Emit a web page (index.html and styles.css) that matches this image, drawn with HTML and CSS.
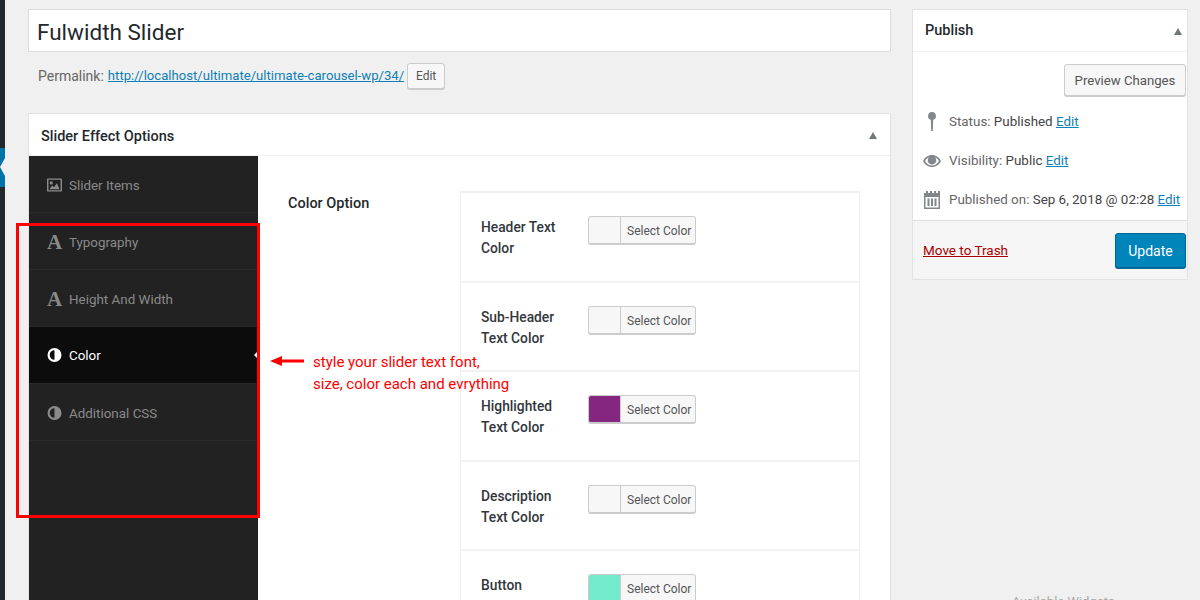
FILE: index.html
```html
<!DOCTYPE html>
<html lang="en">
<head>
  <meta charset="UTF-8" />
  <title>Edit Slider</title>
  <link rel="stylesheet" href="styles.css">
</head>
<body>

  <div class="page">
    <div class="admin-menu">
      <div class="admin-menu-current"></div>
    </div>

    <main class="content">
      <div class="title-box">Fulwidth Slider</div>
      <div class="permalink">
        <span>Permalink:</span>
        <a href="#">http://localhost/ultimate/ultimate-carousel-wp/34/</a>
        <button class="btn btn-small">Edit</button>
      </div>

      <section class="postbox">
        <div class="postbox-head main-head">
          <h2>Slider Effect Options</h2>
          <span class="toggle"></span>
        </div>
        <div class="options">
          <ul class="tabs">
            <li>
              <svg class="tab-icon" viewBox="0 0 16 14"><path fill="currentColor" fill-rule="evenodd" d="M1 0h14a1 1 0 0 1 1 1v12a1 1 0 0 1-1 1H1a1 1 0 0 1-1-1V1a1 1 0 0 1 1-1zm.5 1.500v11h13v-11zM2.500 11.500l3-4 2 2 3-4.500 3 6.500zM4.500 6.500a1.700 1.700 0 1 0 0-3.400 1.700 1.700 0 0 0 0 3.400z"/></svg>
              Slider Items
            </li>
            <li><span class="tab-icon tab-letter">A</span> Typography</li>
            <li><span class="tab-icon tab-letter">A</span> Height And Width</li>
            <li class="active">
              <svg class="tab-icon" viewBox="0 0 14 14"><path fill="currentColor" d="M7 0a7 7 0 1 1 0 14A7 7 0 0 1 7 0zm0 2.200a4.800 4.800 0 0 0 0 9.600z"/></svg>
              Color
            </li>
            <li>
              <svg class="tab-icon" viewBox="0 0 14 14"><path fill="currentColor" d="M7 0a7 7 0 1 1 0 14A7 7 0 0 1 7 0zm0 2.200a4.800 4.800 0 0 0 0 9.600z"/></svg>
              Additional CSS
            </li>
          </ul>

          <div class="panel">
            <div class="panel-label">Color Option</div>
            <div class="color-table">
              <div class="color-row">
                <div class="color-name">Header Text<br>Color</div>
                <div class="picker"><span class="swatch"></span><span class="picker-text">Select Color</span></div>
              </div>
              <div class="color-row">
                <div class="color-name">Sub-Header<br>Text Color</div>
                <div class="picker"><span class="swatch"></span><span class="picker-text">Select Color</span></div>
              </div>
              <div class="color-row">
                <div class="color-name">Highlighted<br>Text Color</div>
                <div class="picker"><span class="swatch swatch-purple"></span><span class="picker-text">Select Color</span></div>
              </div>
              <div class="color-row">
                <div class="color-name">Description<br>Text Color</div>
                <div class="picker"><span class="swatch"></span><span class="picker-text">Select Color</span></div>
              </div>
              <div class="color-row">
                <div class="color-name">Button</div>
                <div class="picker"><span class="swatch swatch-mint"></span><span class="picker-text">Select Color</span></div>
              </div>
            </div>
          </div>
        </div>
      </section>
    </main>

    <aside class="side">
      <section class="publish">
        <div class="postbox-head publish-head">
          <h2>Publish</h2>
          <span class="toggle"></span>
        </div>
        <div class="publish-body">
          <div class="preview-row"><button class="btn btn-preview">Preview Changes</button></div>
          <div class="meta">
            <svg class="meta-icon" viewBox="0 0 18 20"><path fill="#82878c" d="M9 0a4 4 0 0 1 1.200 7.800L9.800 19H8.200L7.800 7.800A4 4 0 0 1 9 0z"/></svg>
            <span>Status: <b>Published</b> <a href="#">Edit</a></span>
          </div>
          <div class="meta">
            <svg class="meta-icon" viewBox="0 0 18 20"><path fill="#82878c" fill-rule="evenodd" d="M9 4c4 0 7.300 2.500 9 6-1.700 3.500-5 6-9 6s-7.300-2.500-9-6c1.700-3.500 5-6 9-6zM2 10c1.500 2.700 4 4.500 7 4.500s5.500-1.800 7-4.500c-1-1.700-2.300-3-4-3.800a4.300 4.300 0 1 1-6 0C4.300 7 3 8.300 2 10z"/></svg>
            <span>Visibility: <b>Public</b> <a href="#">Edit</a></span>
          </div>
          <div class="meta">
            <svg class="meta-icon" viewBox="0 0 18 20"><path fill="#82878c" fill-rule="evenodd" d="M1 3h2V1h2v2h2V1h2v2h2V1h2v2h2V1h2v2h0v16H1zm1.500 4v10.500h13V7zM4.500 8.500h2v7.500h-2zm3.500 0h2v7.500H8zm3.500 0h2v7.500h-2z"/></svg>
            <span>Published on: <b>Sep 6, 2018 @ 02:28</b> <a href="#">Edit</a></span>
          </div>
        </div>
        <div class="publish-foot">
          <a class="trash" href="#">Move to Trash</a>
          <button class="btn btn-primary">Update</button>
        </div>
      </section>
      <div class="side-below">Available Widgets</div>
    </aside>
  </div>

  <!-- red notes drawn over the screenshot -->
  <div class="note-box"></div>
  <svg class="note-arrow" viewBox="0 0 34 12"><path fill="#f00" d="M0 6l12-5v3.500h22v3H12V11z"/></svg>
  <p class="note-text">style your slider text font,<br>size, color each and evrything</p>

</body>
</html>
```

FILE: styles.css
```css
/* Base */
body {
  margin: 0;
  height: 600px;
  overflow: hidden;
  background: #f0f0f0;
  color: #32373c;
  font-family: 'Roboto', 'Noto Sans', sans-serif;
  font-size: 14px;
}
a {
  color: #0f7fb5;
}
h2 {
  margin: 0;
  font-size: 14.500px;
  font-weight: 500;
  color: #23282d;
}
ul {
  list-style: none;
  margin: 0;
  padding: 0;
}

.page {
  display: flex;
  height: 600px;
  overflow: hidden;
}

/* Admin menu edge */
.admin-menu {
  flex: none;
  width: 5px;
  background: #23282d;
  padding-top: 148px;
}
.admin-menu-current {
  position: relative;
  height: 39px;
  background: #0073aa;
}
.admin-menu-current::after {
  content: "";
  position: absolute;
  right: 0;
  top: 10px;
  border: 9px solid transparent;
  border-left-width: 0;
  border-right: 5px solid #f0f0f0;
}

/* Main column */
.content {
  flex: none;
  width: 863px;
  margin-left: 23px;
  padding-top: 9px;
}
.title-box {
  height: 41px;
  padding-left: 8px;
  background: #fff;
  border: 1px solid #ddd;
  font-size: 22.500px;
  line-height: 45px;
  color: #23282d;
}
.permalink {
  display: flex;
  align-items: center;
  height: 27px;
  margin: 10px 0 24px;
  padding-left: 10px;
  font-size: 14px;
  color: #666;
}
.permalink a {
  margin-left: 4px;
  font-size: 13.150px;
}
.btn {
  font-family: inherit;
  border-radius: 3px;
  border: 1px solid #ccc;
  background: #f7f7f7;
  box-shadow: 0 1px 0 #ccc;
  color: #555;
  padding: 0;
}
.btn-small {
  width: 38px;
  height: 26px;
  margin-left: 3px;
  font-size: 12px;
}

/* Postbox */
.postbox {
  background: #fff;
  border: 1px solid #e2e2e2;
  border-bottom: 0;
}
.postbox-head {
  display: flex;
  align-items: center;
  justify-content: space-between;
  height: 41px;
  padding: 0 13px 0 12px;
  border-bottom: 1px solid #eee;
}
.main-head h2 {
  padding-top: 3px;
}
.publish-head {
  padding-right: 5px;
}
.toggle {
  width: 0;
  height: 0;
  margin-top: 2px;
  border: 4.500px solid transparent;
  border-top: 0;
  border-bottom: 7px solid #72777c;
}
.options {
  display: flex;
  height: 444px;
}

/* Tabs */
.tabs {
  flex: none;
  width: 229px;
  background: #222;
  color: #8a8a8a;
}
.tabs li {
  display: flex;
  align-items: center;
  gap: 7px;
  box-sizing: border-box;
  height: 57px;
  padding: 2px 0 0 18px;
  border-bottom: 1px solid #2b2b2b;
  font-size: 13.400px;
}
.tabs li.active {
  position: relative;
  padding-top: 0;
  background: #0c0c0c;
  color: #fff;
}
.tabs li.active::after {
  content: "";
  position: absolute;
  right: 0;
  top: 24px;
  border: 4px solid transparent;
  border-left: 0;
  border-right: 4px solid #fff;
}
.tab-icon {
  width: 15px;
  height: 14px;
  flex: none;
}
.tab-letter {
  font-family: 'Liberation Serif', serif;
  font-weight: 700;
  font-size: 21px;
  line-height: 14px;
  text-align: center;
}

/* Color options */
.panel {
  flex: 1;
  display: flex;
  padding: 35px 30px 0;
}
.panel-label {
  width: 172px;
  flex: none;
  padding-top: 4px;
  font-size: 14.500px;
  font-weight: 500;
  color: #23282d;
}
.color-table {
  flex: 1;
  height: 420px;
  border: 1px solid #eee;
  border-top-width: 2px;
  border-bottom: 0;
}
.color-row {
  display: flex;
  box-sizing: border-box;
  height: 89.500px;
  padding: 23px 20px 0;
  border-bottom: 2px solid #f2f2f2;
}
.color-name {
  width: 107px;
  flex: none;
  padding-top: 1px;
  font-size: 13.800px;
  line-height: 21px;
  font-weight: 500;
  color: #32373c;
}
.picker {
  display: flex;
  box-sizing: border-box;
  width: 108px;
  height: 29px;
  border: 1px solid #ccc;
  border-bottom-width: 2px;
  border-radius: 3px;
  background: #f7f7f7;
  overflow: hidden;
}
.swatch {
  flex: none;
  width: 31px;
  border-right: 1px solid #ccc;
}
.swatch-purple {
  background: #852681;
}
.swatch-mint {
  background: #71ebcc;
}
.picker-text {
  padding-left: 6px;
  font-size: 12px;
  line-height: 29px;
  color: #555;
}

/* Publish box */
.side {
  flex: none;
  width: 276px;
  margin-left: 21px;
  padding-top: 9px;
}
.publish {
  background: #fff;
  border: 1px solid #e2e2e2;
}
.publish-body {
  padding: 12px 1px 0 10px;
  height: 168px;
  box-sizing: border-box;
}
.preview-row {
  display: flex;
  justify-content: flex-end;
  margin-bottom: 6px;
}
.btn-preview {
  width: 122px;
  height: 32px;
  font-size: 13.200px;
}
.meta {
  display: flex;
  align-items: center;
  gap: 8px;
  height: 39px;
  font-size: 13.400px;
  color: #666;
}
.meta b {
  font-weight: 400;
  color: #444;
}
.meta-icon {
  width: 18px;
  height: 20px;
  flex: none;
}
.publish-foot {
  display: flex;
  align-items: center;
  justify-content: space-between;
  height: 58px;
  padding: 0 1px 0 10px;
  background: #f5f5f5;
  border-top: 1px solid #ddd;
}
.trash {
  color: #a00;
  font-size: 13.500px;
}
.btn-primary {
  width: 71px;
  height: 35px;
  padding-top: 2px;
  background: #0085ba;
  border-color: #006799;
  box-shadow: 0 1px 0 #006799;
  color: #fff;
  font-size: 14px;
}
.side-below {
  margin-top: 314px;
  padding-left: 100px;
  font-size: 13px;
  line-height: 16px;
  color: #aaa;
}

/* Red notes */
.note-box {
  position: absolute;
  left: 16px;
  top: 223px;
  box-sizing: border-box;
  width: 244px;
  height: 295px;
  border: 3px solid #f00;
}
.note-arrow {
  position: absolute;
  left: 270px;
  top: 355px;
  width: 34px;
  height: 12px;
}
.note-text {
  position: absolute;
  left: 313px;
  top: 351px;
  margin: 0;
  font-size: 15px;
  line-height: 22px;
  color: #f00;
}
```
